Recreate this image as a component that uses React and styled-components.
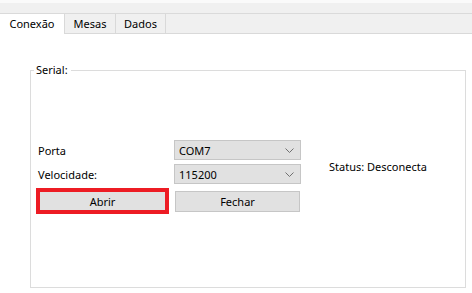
import React from "react";
import styled, { createGlobalStyle } from "styled-components";

const GlobalStyle = createGlobalStyle`
    html, body {
        margin: 0;
        padding: 0;
        background: #ffffff;
        overflow: hidden;
    }
    body {
        font-family: "Noto Sans", "Liberation Sans", sans-serif;
        font-size: 11px;
        color: #000;
    }
`;

const Window = styled.div`
    display: flex;
    flex-direction: column;
    width: 472px;
    height: 293px;
    background: #ffffff;
`;

const TopStrip = styled.div`
    height: 13px;
    background: linear-gradient(#fafafa 0, #fafafa 3px, #f0f0f0 3px);
    border-bottom: 1px solid #dadada;
`;

const TabBar = styled.div`
    display: flex;
    height: 19px;
    background: #f0f0f0;
    border-bottom: 1px solid #d9d9d9;
`;

const Tab = styled.div`
    display: flex;
    align-items: center;
    justify-content: center;
    width: ${p => p.$width}px;
    box-sizing: border-box;
    border-right: 1px solid #d9d9d9;
    background: ${p => (p.$active ? "#ffffff" : "#f0f0f0")};
    margin-bottom: ${p => (p.$active ? "-1px" : "0")};
    padding-bottom: ${p => (p.$active ? "1px" : "0")};
`;

const Content = styled.div`
    flex: 1;
    display: flex;
    padding: 36px 6px 5px 30px;
`;

const Group = styled.div`
    position: relative;
    flex: 1;
    border: 1px solid #dcdcdc;
    padding: 69px 0 0 5px;
`;

const Legend = styled.span`
    position: absolute;
    top: -9px;
    left: 3px;
    padding: 0 3px 0 2px;
    line-height: 16px;
    background: #ffffff;
`;

const Form = styled.div`
    display: grid;
    grid-template-columns: 133px 127px 120px;
    grid-template-rows: 20px 20px 26px;
    column-gap: 5px;
    row-gap: 4px;
`;

const Label = styled.span`
    align-self: center;
    padding-left: 2px;
`;

const Combo = styled.div`
    display: flex;
    align-items: center;
    justify-content: space-between;
    box-sizing: border-box;
    height: 20px;
    padding: 0 6px 0 4px;
    background: #e1e1e1;
    border: 1px solid #c6c6c6;
`;

const Status = styled.div`
    grid-column: 3;
    grid-row: 2;
    align-self: start;
    margin: -5px 0 0 23px;
    line-height: 16px;
    white-space: nowrap;
`;

const Highlight = styled.div`
    display: flex;
    border: 4px solid #ed1c24;
`;

const Button = styled.div`
    flex: 1;
    display: flex;
    align-items: center;
    justify-content: center;
    box-sizing: border-box;
    height: ${p => p.$height || 18}px;
    align-self: center;
    margin-left: ${p => p.$offset || 0}px;
    width: ${p => (p.$width ? p.$width + "px" : "auto")};
    background: #e1e1e1;
    border: 1px solid ${p => p.$plain ? "#e1e1e1" : "#c6c6c6"};
`;

const Chevron = () => (
    <svg width="9" height="5" viewBox="0 0 9 5">
        <path d="M0.5 0.5 L4.5 4.5 L8.5 0.5" fill="none" stroke="#707070" strokeWidth="1" />
    </svg>
);

export default function App() {
    return (
        <Window>
            <GlobalStyle />
            <TopStrip />
            <TabBar>
                <Tab $width={65} $active>Conexão</Tab>
                <Tab $width={51}>Mesas</Tab>
                <Tab $width={50}>Dados</Tab>
            </TabBar>
            <Content>
                <Group>
                    <Legend>Serial:</Legend>
                    <Form>
                        <Label>Porta</Label>
                        <Combo>COM7<Chevron /></Combo>
                        <span />
                        <Label>Velocidade:</Label>
                        <Combo>115200<Chevron /></Combo>
                        <Status>Status: Desconecta</Status>
                        <Highlight>
                            <Button $plain>Abrir</Button>
                        </Highlight>
                        <Button $width={125} $height={21} $offset={1}>Fechar</Button>
                    </Form>
                </Group>
            </Content>
        </Window>
    );
}
